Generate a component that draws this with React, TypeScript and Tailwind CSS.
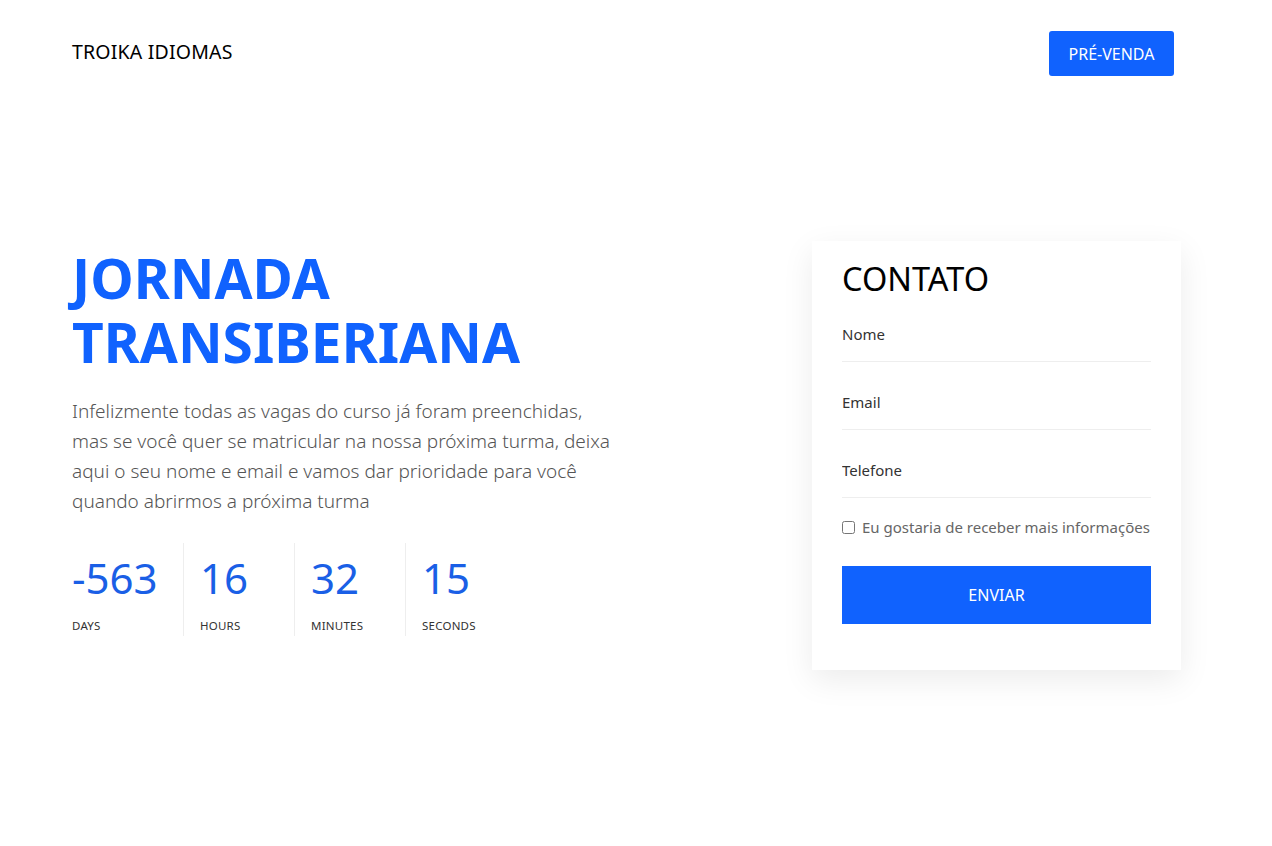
import React from 'react'

const units = [
  { value: '-563', label: 'Days' },
  { value: '16', label: 'Hours' },
  { value: '32', label: 'Minutes' },
  { value: '15', label: 'Seconds' },
]

const fields = ['Nome', 'Email', 'Telefone']

export default function App() {
  return (
    <div className="min-h-[846px] bg-white font-['Noto_Sans',sans-serif]">
      {/* Header */}
      <header className="flex items-center justify-between pl-[72px] pr-[98px] pt-[31px]">
        <span className="text-[19.5px] text-black tracking-[0.01em] leading-none -mt-[4px]">TROIKA IDIOMAS</span>
        <button className="h-[45px] w-[125px] rounded-[3px] bg-[#1062fe] text-[16px] text-white">
          PRÉ-VENDA
        </button>
      </header>

      {/* Hero */}
      <main className="flex justify-between pl-[72px] pr-[91px] pt-[165px]">
        <section className="w-[580px] pt-[5px]">
          <h1 className="text-[55px] font-bold leading-[64px] text-[#1062fe]">
            JORNADA
            <br />
            TRANSIBERIANA
          </h1>
          <p className="mt-[22px] text-[19px] font-light leading-[30px] text-[#555]">
            Infelizmente todas as vagas do curso já foram preenchidas,
            <br />
            mas se você quer se matricular na nossa próxima turma, deixa
            <br />
            aqui o seu nome e email e vamos dar prioridade para você
            <br />
            quando abrirmos a próxima turma
          </p>

          <div className="mt-[27px] flex">
            {units.map((u, i) => (
              <div
                key={u.label}
                className={
                  i === 0
                    ? 'w-[111px] h-[93px]'
                    : 'w-[111px] h-[93px] border-l border-[#eeeeee] pl-[16px]'
                }
              >
                <div className="pt-[13px] text-[42px] leading-[44px] text-[#1a5fe6]">{u.value}</div>
                <div className="mt-[17px] text-[11.5px] uppercase text-[#333] tracking-[0.02em]">{u.label}</div>
              </div>
            ))}
          </div>
        </section>

        {/* Contact card */}
        <aside className="w-[369px] bg-white px-[30px] pt-[19px] pb-[46px] shadow-[0_10px_30px_rgba(0,0,0,0.08)]">
          <h2 className="text-[32.5px] leading-[38px] text-black">CONTATO</h2>
          <div className="mt-[16px]">
            {fields.map((f) => (
              <div key={f} className="h-[68px]">
                <input
                  placeholder={f}
                  className="h-[48px] w-full border-b border-[#eeeeee] pb-[8px] text-[15px] text-[#333] placeholder:text-[#333] outline-none"
                />
              </div>
            ))}
          </div>
          <label className="-mt-[2px] flex items-center gap-[7px] text-[15px] text-[#666]">
            <input type="checkbox" className="h-[13px] w-[13px]" />
            Eu gostaria de receber mais informações
          </label>
          <button className="mt-[27px] h-[58px] w-full bg-[#1062fe] text-[16px] text-white">ENVIAR</button>
        </aside>
      </main>
    </div>
  )
}
